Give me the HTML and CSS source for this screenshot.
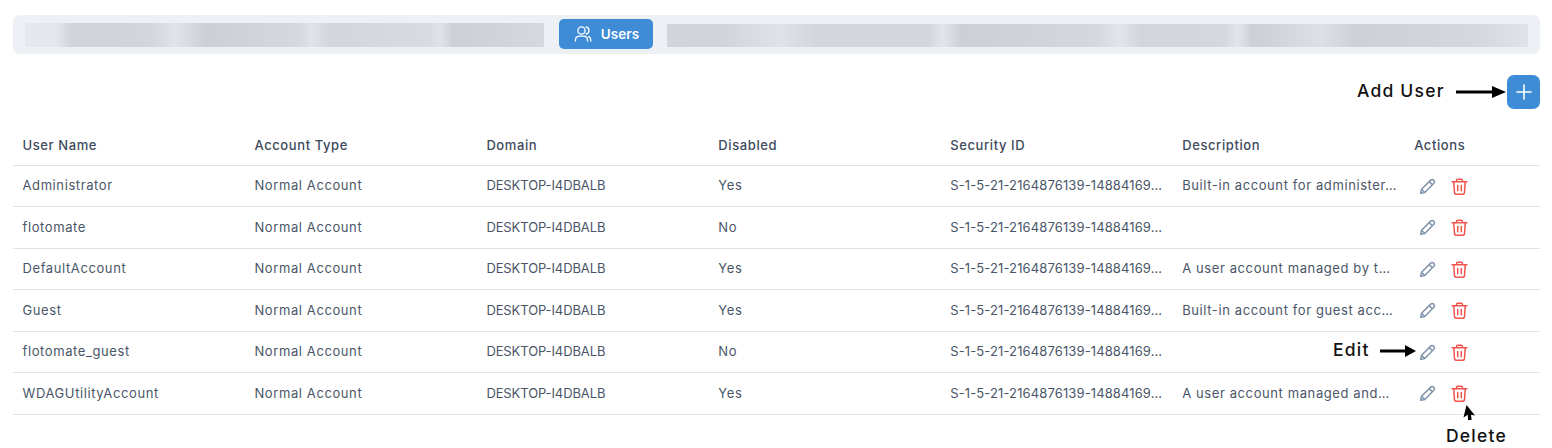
FILE: index.html
```html
<!DOCTYPE html>
<html lang="en">
<head>
<meta charset="utf-8">
<title>Users</title>
<link rel="stylesheet" href="styles.css">
</head>
<body>
<svg class="defs" width="0" height="0" aria-hidden="true">
  <symbol id="i-pencil" viewBox="0 0 16 16">
    <path d="M1.6 14.4 2.4 10.6 11 2a1.9 1.9 0 0 1 2.7 0l.3.3a1.9 1.9 0 0 1 0 2.7L5.4 13.6Z M2.4 10.6l3 3 M9.6 3.4l3 3"/>
  </symbol>
  <symbol id="i-trash" viewBox="0 0 16 16">
    <path d="M1 3.6h14 M5.3 3.4V2.2q0-1 1-1h3.4q1 0 1 1v1.2 M2.6 3.6l.7 10.2q.1 1.4 1.5 1.4h6.4q1.4 0 1.5-1.4l.7-10.2 M6.3 7v5 M9.7 7v5"/>
  </symbol>
</svg>
<main class="page">
  <nav class="tabbar">
    <div class="blur blur-left"></div>
    <button class="tab-active">
      <svg class="tab-icon" viewBox="0 0 18 18"><circle cx="7.5" cy="5.5" r="3.6"/><path d="M1.5 16v-.8c0-2.6 2-4 4-4h4c2 0 4 1.4 4 4v.8 M12 1.9a3.6 3.6 0 0 1 0 7.1 M14.6 11.4c1.3.6 2.2 1.9 2.2 3.6v1"/></svg>
      <span>Users</span>
    </button>
    <div class="blur blur-right"></div>
  </nav>
  <div class="toolbar">
    <button class="add-btn" aria-label="Add User">
      <svg viewBox="0 0 16 16"><path d="M8 1v14 M1 8h14"/></svg>
    </button>
  </div>
  <table class="users">
    <thead>
      <tr><th>User Name</th><th>Account Type</th><th>Domain</th><th>Disabled</th><th>Security ID</th><th>Description</th><th>Actions</th></tr>
    </thead>
    <tbody>
      <tr><td>Administrator</td><td>Normal Account</td><td class="caps">DESKTOP-I4DBALB</td><td>Yes</td><td class="sid">S-1-5-21-2164876139-14884169…</td><td>Built-in account for administer…</td><td class="acts"><svg class="ic pencil"><use href="#i-pencil"/></svg><svg class="ic trash"><use href="#i-trash"/></svg></td></tr>
      <tr><td>flotomate</td><td>Normal Account</td><td class="caps">DESKTOP-I4DBALB</td><td>No</td><td class="sid">S-1-5-21-2164876139-14884169…</td><td></td><td class="acts"><svg class="ic pencil"><use href="#i-pencil"/></svg><svg class="ic trash"><use href="#i-trash"/></svg></td></tr>
      <tr><td>DefaultAccount</td><td>Normal Account</td><td class="caps">DESKTOP-I4DBALB</td><td>Yes</td><td class="sid">S-1-5-21-2164876139-14884169…</td><td>A user account managed by t…</td><td class="acts"><svg class="ic pencil"><use href="#i-pencil"/></svg><svg class="ic trash"><use href="#i-trash"/></svg></td></tr>
      <tr><td>Guest</td><td>Normal Account</td><td class="caps">DESKTOP-I4DBALB</td><td>Yes</td><td class="sid">S-1-5-21-2164876139-14884169…</td><td>Built-in account for guest acc…</td><td class="acts"><svg class="ic pencil"><use href="#i-pencil"/></svg><svg class="ic trash"><use href="#i-trash"/></svg></td></tr>
      <tr><td>flotomate_guest</td><td>Normal Account</td><td class="caps">DESKTOP-I4DBALB</td><td>No</td><td class="sid">S-1-5-21-2164876139-14884169…</td><td></td><td class="acts"><svg class="ic pencil"><use href="#i-pencil"/></svg><svg class="ic trash"><use href="#i-trash"/></svg></td></tr>
      <tr><td>WDAGUtilityAccount</td><td>Normal Account</td><td class="caps">DESKTOP-I4DBALB</td><td>Yes</td><td class="sid">S-1-5-21-2164876139-14884169…</td><td>A user account managed and…</td><td class="acts"><svg class="ic pencil"><use href="#i-pencil"/></svg><svg class="ic trash"><use href="#i-trash"/></svg></td></tr>
    </tbody>
  </table>

  <span class="note note-add">Add User</span>
  <svg class="arrow arrow-add" viewBox="0 0 50 14"><path d="M0 5.4 36 5.6V1l14 6-14 6V8.4L0 8.6Z"/></svg>
  <span class="note note-edit">Edit</span>
  <svg class="arrow arrow-edit" viewBox="0 0 36 12"><path d="M0 4.5H25V0l11 6-11 6V7.5H0Z"/></svg>
  <svg class="arrow arrow-del" viewBox="0 0 12 15"><path d="M3.5 0 12 10.5 8 9.8 8.6 15 5 15 4.8 9.8 0.5 12.5Z"/></svg>
  <span class="note note-del">Delete</span>
</main>
</body>
</html>
```
FILE: styles.css
```css
* { box-sizing: border-box; }
html, body { margin: 0; background: #fff; }
body { font-family: Inter, "Noto Sans", sans-serif; color: #3d4a5c; overflow: hidden; }
.defs { position: absolute; }
.page { position: relative; width: 1552px; height: 448px; padding: 15px 12px 0 13px; }

.tabbar {
  display: flex; align-items: center; height: 39px; padding: 0 12px;
  background: #edf0f5; border-radius: 7px;
}
.blur { height: 24px; }
.blur-left {
  width: 519px;
  background: linear-gradient(90deg, #e5e8ed 0%, #e4e7ec 6%, #d0d4d8 9%, #d2d6da 24%, #e0e3e8 29%, #ccd0d4 35%, #d5d8dc 53%, #e0e3e9 55%, #d2d6da 59%, #d8dbe0 78%, #e0e3e8 80%, #ccd0d4 82.5%, #d5d8dc 100%);
}
.blur-right {
  flex: 1; margin-top: 1px; height: 23px;
  background: linear-gradient(90deg, #d2d6da 0%, #d0d4d8 6%, #dfe2e6 13%, #d2d6da 17.7%, #d2d6da 30.3%, #e2e5ea 32%, #ccd0d4 34.3%, #d4d7dc 49.7%, #e2e5ea 52.6%, #d2d6da 55%, #d4d7dc 64.6%, #e2e5ea 66.3%, #ccd0d4 68%, #dcdfe4 76%, #cdd0d6 80%, #d4d7dc 94%, #e0e3e8 100%);
}
.tab-active {
  display: flex; align-items: center; justify-content: center; gap: 9px;
  width: 94px; height: 30px; margin: 0 14px 1px 15px; padding: 0 0 0 1px; border: 0;
  border-radius: 5px; background: #3f8cd6; color: #fff;
  font: 600 13.5px Inter, sans-serif; letter-spacing: .1px;
}
.tab-icon { width: 18px; height: 18px; fill: none; stroke: #fff; stroke-width: 1.3; stroke-linecap: round; }

.toolbar { display: flex; justify-content: flex-end; margin-top: 21px; height: 34px; }
.add-btn {
  display: flex; align-items: center; justify-content: center;
  width: 33px; height: 34px; padding: 0; border: 0; border-radius: 7px; background: #3f8cd6;
}
.add-btn svg { width: 16px; height: 16px; fill: none; stroke: #fff; stroke-width: 1.6; stroke-linecap: round; }

.users { width: 1527px; margin-top: 15px; border-collapse: collapse; table-layout: fixed; font-size: 13px; letter-spacing: .6px; }
.users th, .users td {
  width: 231.95px; padding: 0 0 0 9.5px; text-align: left; white-space: nowrap;
  border-bottom: 1px solid #dfe4ec;
}
.users th:last-child { width: auto; }
.users th { height: 41px; padding-top: 2px; font-weight: 500; color: #3d4a5c; }
.users td { height: 41.5px; padding-bottom: 1px; font-weight: 400; color: #4a5668; }
.users td.caps { letter-spacing: -.1px; }
.users td.sid { letter-spacing: .12px; }
.users td.acts { padding: 0 0 0 14.5px; }

.ic { display: inline-block; vertical-align: middle; width: 17px; height: 17px; fill: none; stroke-width: 1.4; stroke-linecap: round; stroke-linejoin: round; }
.pencil { stroke: #7f93ab; margin-right: 15px; }
.trash { stroke: #f4524c; }

.note { position: absolute; font-size: 17.5px; font-weight: 500; line-height: 22px; color: #111; letter-spacing: 1.2px; white-space: nowrap; }
.note-add { left: 1357px; top: 80px; }
.note-edit { left: 1333px; top: 339px; }
.note-del { left: 1446px; top: 425px; }
.arrow { position: absolute; fill: #000; }
.arrow-add { left: 1456px; top: 85px; width: 50px; height: 14px; }
.arrow-edit { left: 1380px; top: 345px; width: 36px; height: 12px; }
.arrow-del { left: 1463px; top: 405px; width: 12px; height: 15px; }
```
